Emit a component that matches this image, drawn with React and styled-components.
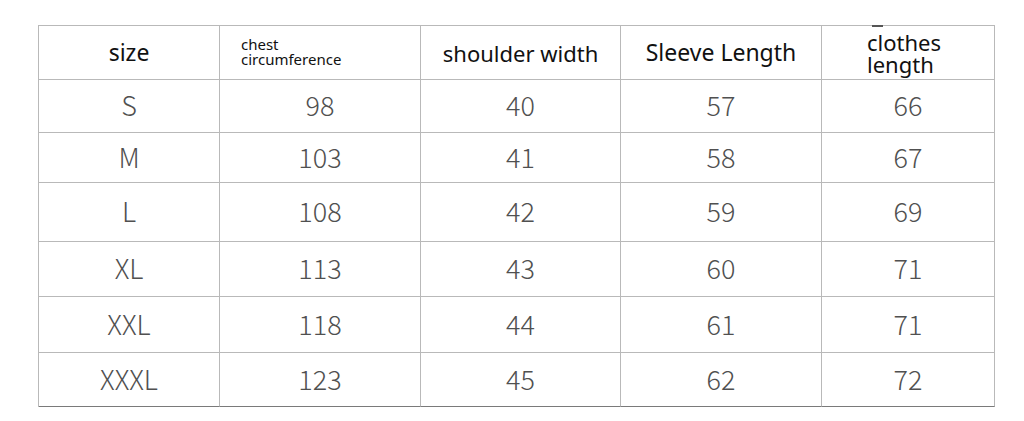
import styled, { createGlobalStyle } from "styled-components";

const GlobalStyle = createGlobalStyle`
  html, body {
    margin: 0;
    padding: 0;
    background: #ffffff;
  }
`;

const columns = ["181px", "201px", "200px", "201px", "173px"];
const rowHeights = [54, 53, 50, 59, 55, 56, 54];

const rows = [
  ["S", "98", "40", "57", "66"],
  ["M", "103", "41", "58", "67"],
  ["L", "108", "42", "59", "69"],
  ["XL", "113", "43", "60", "71"],
  ["XXL", "118", "44", "61", "71"],
  ["XXXL", "123", "45", "62", "72"],
];

export default function App() {
  return (
    <>
      <GlobalStyle />
      <Page>
        <Table>
          <Cell $head $wide>size</Cell>
          <Cell $head $small $left>
            chest
            <br />
            circumference
          </Cell>
          <Cell $head>shoulder width</Cell>
          <Cell $head $wide>Sleeve Length</Cell>
          <Cell $head $left $tight $mark>
            clothes
            <br />
            length
          </Cell>
          {rows.map((row, r) =>
            row.map((value, c) => (
              <Cell key={`${r}-${c}`} $last={r === rows.length - 1}>
                {value}
              </Cell>
            ))
          )}
        </Table>
      </Page>
    </>
  );
}

const Page = styled.div`
  width: 1024px;
  height: 421px;
  box-sizing: border-box;
  padding: 25px 0 0 38px;
  background: #ffffff;
`;

const Table = styled.div`
  display: grid;
  grid-template-columns: ${columns.join(" ")};
  grid-template-rows: ${rowHeights.map((h) => `${h}px`).join(" ")};
  width: max-content;
  border-top: 1px solid #b9b9b9;
  border-left: 1px solid #b9b9b9;
`;

const Cell = styled.div`
  position: relative;
  box-sizing: border-box;
  display: flex;
  align-items: center;
  justify-content: ${(p) => (p.$left ? "flex-start" : "center")};
  padding-left: ${(p) => (p.$small ? "21px" : p.$left ? "45px" : "0")};
  padding-bottom: ${(p) => (p.$head ? "0" : "3px")};
  border-right: 1px solid #b9b9b9;
  border-bottom: 1px solid ${(p) => (p.$last ? "#7a7a7a" : "#b9b9b9")};
  font-family: ${(p) =>
    p.$head
      ? '"Noto Sans", "Liberation Sans", sans-serif'
      : '"Noto Sans CJK SC", "Noto Sans", sans-serif'};
  font-weight: ${(p) => (p.$head ? 400 : 300)};
  font-size: ${(p) =>
    p.$small ? "15px" : p.$wide ? "23px" : p.$head ? "22px" : "27px"};
  line-height: ${(p) => (p.$small ? "15px" : p.$tight ? "22px" : "1")};
  color: ${(p) => (p.$head ? "#111111" : "#505050")};
  white-space: nowrap;
  ${(p) =>
    p.$small &&
    `
    align-items: flex-start;
    padding-top: 11px;
  `}
  ${(p) =>
    p.$tight &&
    `
    align-items: flex-start;
    padding-top: 5px;
  `}
  ${(p) =>
    p.$mark &&
    `
    &::before {
      content: "";
      position: absolute;
      top: -1px;
      left: 50px;
      width: 11px;
      height: 2px;
      background: #555555;
    }
  `}
`;
